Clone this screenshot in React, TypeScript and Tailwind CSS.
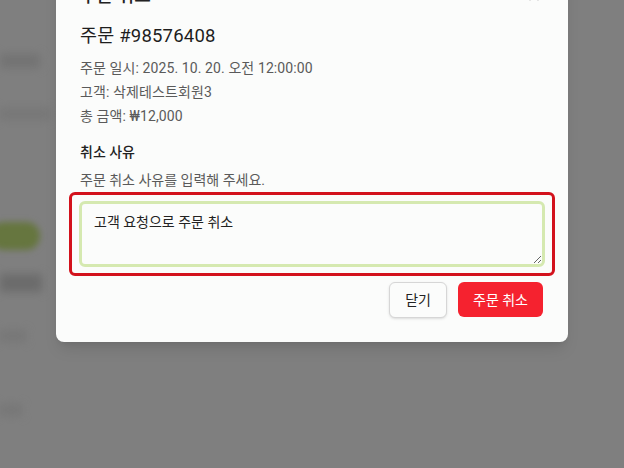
import React from "react";
import { X } from "lucide-react";

const font = { fontFamily: 'Roboto, "Noto Sans CJK KR", sans-serif' };

// Dimmed page behind the dialog: just a few blurred shapes
const Backdrop = () => (
    <div className="absolute inset-0 bg-[#7f7f7f] overflow-hidden">
        <div className="absolute left-0 top-[54px] w-[40px] h-[14px] bg-[#737373] blur-[4px]" />
        <div className="absolute left-0 top-[108px] w-[50px] h-[12px] bg-[#777777] blur-[4px]" />
        <div className="absolute left-[-10px] top-[222px] w-[50px] h-[28px] rounded-full bg-[#66763f] blur-[3px]" />
        <div className="absolute left-0 top-[274px] w-[42px] h-[18px] bg-[#6c6c6c] blur-[4px]" />
        <div className="absolute left-0 top-[330px] w-[26px] h-[12px] bg-[#777777] blur-[4px]" />
        <div className="absolute left-0 top-[404px] w-[22px] h-[12px] bg-[#777777] blur-[4px]" />
    </div>
);

export default function App() {
    return (
        <div className="relative w-[624px] h-[468px] overflow-hidden" style={font}>
            <Backdrop />
            <div className="relative flex justify-center">
                <div className="mt-[-42px] w-[512px] bg-[#fbfcfb] rounded-lg p-6 shadow-lg">
                    {/* Header */}
                    <div className="flex items-center justify-between h-[28px]">
                        <h2 className="text-lg font-medium text-[#222]">주문 취소</h2>
                        <X className="w-4 h-4 text-[#c8c8c8] mr-[2px]" />
                    </div>

                    <div className="mt-3 text-[18.5px] font-normal text-[#1e1e1e] leading-7 tracking-[0.2px]">주문 #98576408</div>

                    <div className="mt-2 flex flex-col gap-1 text-sm text-[#5a5a5a] leading-5 tracking-[0.1px]">
                        <div>주문 일시: 2025. 10. 20. 오전 12:00:00</div>
                        <div>고객: 삭제테스트회원3</div>
                        <div>총 금액: ₩12,000</div>
                    </div>

                    <div className="mt-4 text-sm font-medium text-[#222] leading-5">취소 사유</div>
                    <div className="mt-2 text-sm text-[#5a5a5a] leading-5">주문 취소 사유를 입력해 주세요.</div>

                    {/* Reason input, outlined in red */}
                    <div className="mt-[2px] -mx-[11px] border-[3px] border-[#d3121c] rounded-md px-[7px] py-[6px]">
                        <textarea
                            className="block w-full h-[66px] resize-y rounded-md border-[3px] border-[#d5e9b0] bg-[#fbfcfb] px-[12px] py-[8px] text-sm text-[#222] outline-none"
                            style={font}
                            defaultValue="고객 요청으로 주문 취소"
                        />
                    </div>

                    <div className="mt-[6px] flex justify-end gap-[11px]">
                        <button className="h-9 px-[15px] rounded-md border border-[#d6d6d6] bg-[#fbfcfb] text-sm text-[#222] shadow-sm" style={font}>
                            닫기
                        </button>
                        <button className="h-[35px] px-[15px] rounded-md bg-[#f5222f] text-sm text-white mr-[1px]" style={font}>
                            주문 취소
                        </button>
                    </div>
                </div>
            </div>
        </div>
    );
}
